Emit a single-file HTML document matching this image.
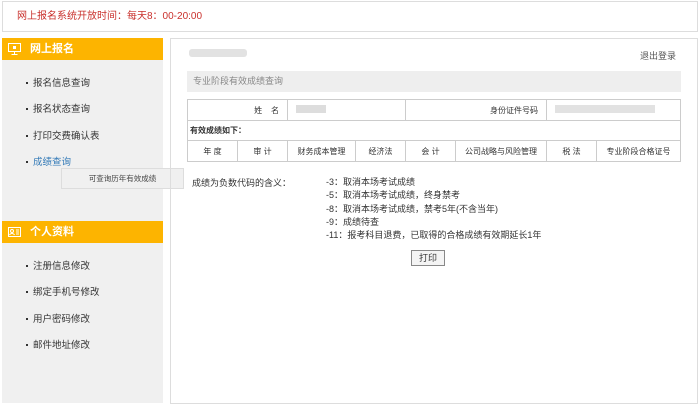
<!DOCTYPE html>
<html><head><meta charset="utf-8"><style>
*{margin:0;padding:0;box-sizing:border-box}
body{width:700px;height:406px;background:#fff;font-family:"Liberation Sans","Noto Sans CJK SC",sans-serif;font-size:9px;color:#333;position:relative;overflow:hidden}
.a{position:absolute}
.top{left:2px;top:1px;width:696px;height:31px;border:1px solid #ddd;color:#c9302c;font-size:10px;line-height:29px;padding-left:14px}
.side{left:2px;top:38px;width:161px;height:365px;background:#f0f0f0}
.hd{position:absolute;left:0;width:161px;height:22px;background:#fdb400;color:#fff;font-weight:bold;font-size:11px;line-height:22px;padding-left:28px}
.li{position:absolute;left:24px;font-size:9.5px;color:#333}
.li:before{content:"";display:inline-block;width:2px;height:2px;background:#333;margin-right:5px;vertical-align:middle}
.main{left:170px;top:38px;width:528px;height:366px;border:1px solid #ddd}
table{border-collapse:collapse;position:absolute;left:187px;top:99px;width:494px;font-size:8px;table-layout:fixed}
td{border:1px solid #ccc;height:21px;text-align:center;color:#333}
</style></head><body>
<div class="a top">网上报名系统开放时间：每天8：00-20:00</div>
<div class="a side">
<div class="hd" style="top:0"><svg class="a" style="left:6px;top:5px" width="13" height="12" viewBox="0 0 13 12"><rect x="0.5" y="0.5" width="12" height="8" fill="none" stroke="#fff"/><path d="M6.5 9v2M3.5 11.5h6" stroke="#fff"/><rect x="5" y="3" width="3" height="3" fill="#fff"/></svg>网上报名</div>
<div class="li" style="top:37px">报名信息查询</div>
<div class="li" style="top:63px">报名状态查询</div>
<div class="li" style="top:90px">打印交费确认表</div>
<div class="li" style="top:116px;color:#337ab7">成绩查询</div>
<div class="hd" style="top:183px"><svg class="a" style="left:6px;top:6px" width="13" height="10" viewBox="0 0 13 10"><rect x="0.5" y="0.5" width="12" height="9" fill="none" stroke="#fff"/><circle cx="4" cy="4" r="1.5" fill="none" stroke="#fff"/><path d="M1.5 8c1-2 4-2 5 0M8 3h3M8 5h3M8 7h3" stroke="#fff" fill="none"/></svg>个人资料</div>
<div class="li" style="top:220px">注册信息修改</div>
<div class="li" style="top:246px">绑定手机号修改</div>
<div class="li" style="top:273px">用户密码修改</div>
<div class="li" style="top:299px">邮件地址修改</div>
</div>
<div class="a" style="left:61px;top:168px;width:123px;height:21px;background:#f0f0f0;border:1px solid #ddd;font-size:7.5px;line-height:19px;text-align:center;color:#444">可查询历年有效成绩</div>
<div class="a main"></div>
<div class="a" style="left:189px;top:49px;width:58px;height:8px;background:#e2e2e2;border-radius:3px"></div>
<div class="a" style="left:640px;top:49px;font-size:9px;color:#555">退出登录</div>
<div class="a" style="left:187px;top:71px;width:494px;height:21px;background:#eee;color:#888;font-size:9px;line-height:21px;padding-left:6px">专业阶段有效成绩查询</div>
<table>
<colgroup><col style="width:50px"><col style="width:50px"><col style="width:68px"><col style="width:50px"><col style="width:50px"><col style="width:91px"><col style="width:50px"><col></colgroup>
<tr><td colspan="2" style="text-align:right;padding-right:8px">姓 &nbsp; &nbsp;名</td><td colspan="2" style="text-align:left"><span style="display:inline-block;width:30px;height:8px;background:#ddd;margin-left:8px"></span></td><td colspan="2" style="text-align:right;padding-right:8px">身份证件号码</td><td colspan="2" style="text-align:left"><span style="display:inline-block;width:100px;height:8px;background:#e2e2e2;margin-left:8px"></span></td></tr>
<tr><td colspan="8" style="text-align:left;font-weight:bold;height:20px;padding-left:2px">有效成绩如下：</td></tr>
<tr><td>年 度</td><td>审 计</td><td>财务成本管理</td><td>经济法</td><td>会 计</td><td>公司战略与风险管理</td><td>税 法</td><td>专业阶段合格证号</td></tr>
</table>
<div class="a" style="left:192px;top:176px;font-size:9px">成绩为负数代码的含义：</div>
<div class="a" style="left:326px;top:176px;font-size:9px;line-height:13.3px">-3：取消本场考试成绩<br>-5：取消本场考试成绩，终身禁考<br>-8：取消本场考试成绩，禁考5年(不含当年)<br>-9：成绩待查<br>-11：报考科目退费，已取得的合格成绩有效期延长1年</div>
<div class="a" style="left:411px;top:250px;width:34px;height:16px;border:1px solid #888;background:#f4f4f4;font-size:9px;line-height:14px;text-align:center">打印</div>
</body></html>
